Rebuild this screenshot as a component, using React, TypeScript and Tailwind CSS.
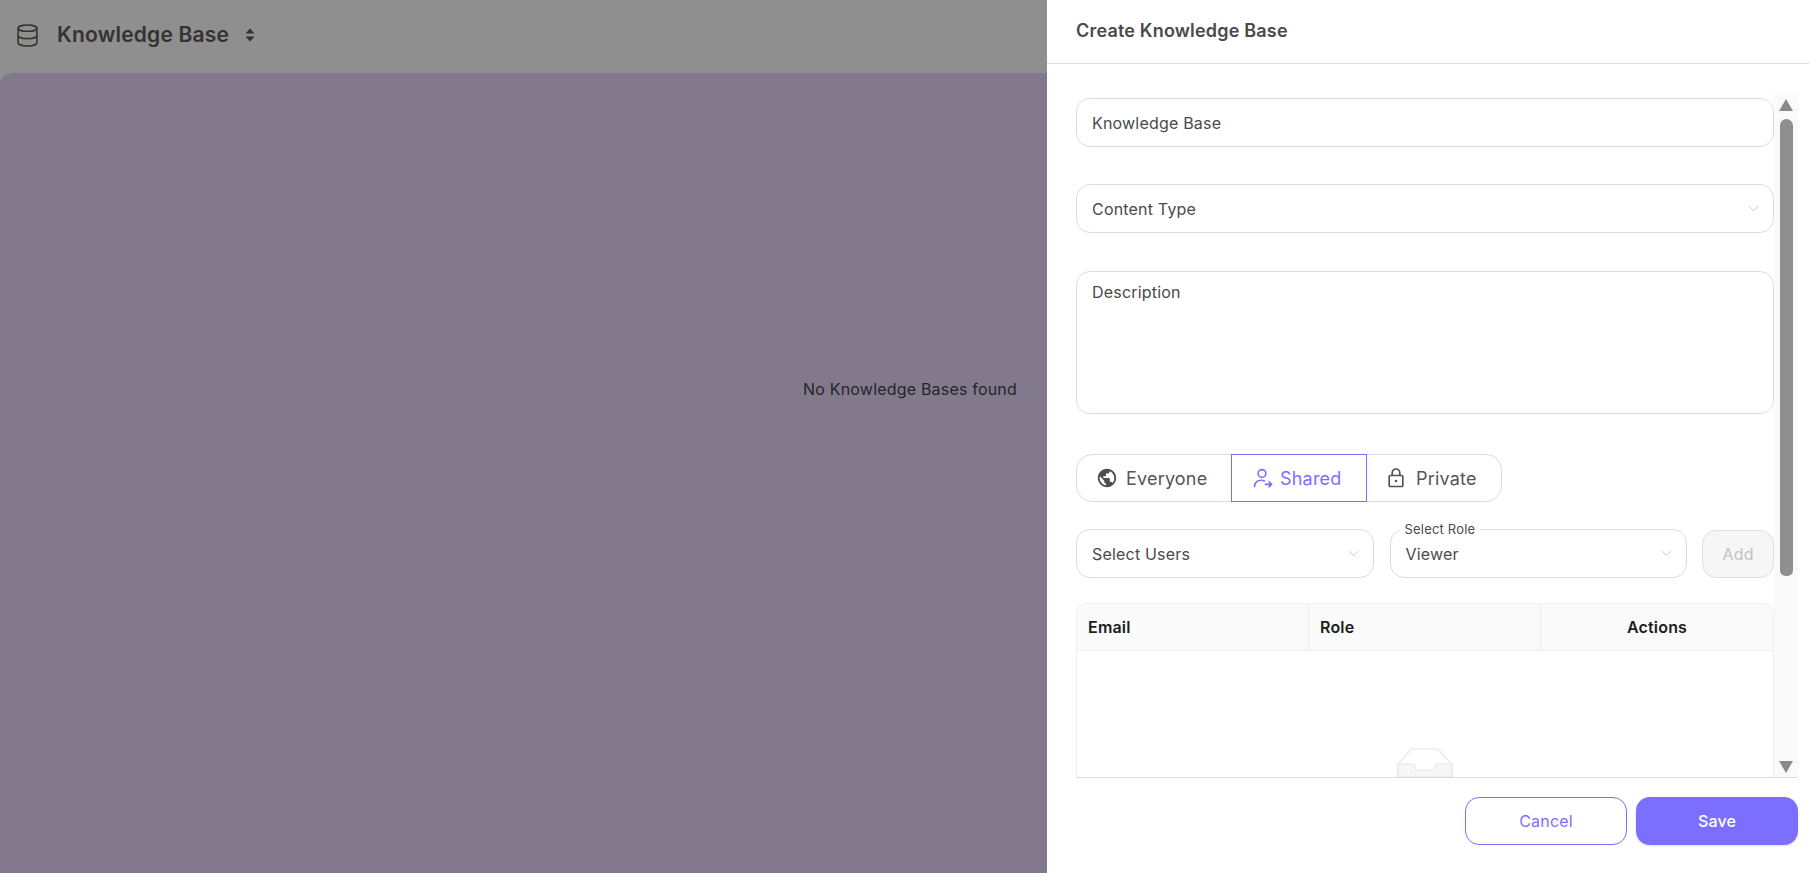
import { ChevronDown, Database } from 'lucide-react';
import { MdPublic } from 'react-icons/md';

function SharedIcon() {
  return (
    <svg width="20" height="20" viewBox="0 0 20 20" fill="none" stroke="currentColor" strokeWidth="1.6" strokeLinecap="round" strokeLinejoin="round">
      <circle cx="9" cy="5.5" r="3.9" />
      <path d="M1.6 18.5c0-3.9 2.8-6.3 6.6-6.3 1.2 0 2.2.2 3.1.6" />
      <path d="M12.4 16.4h6M16 13.8l2.6 2.6-2.6 2.4" />
    </svg>
  );
}

function LockIcon() {
  return (
    <svg width="18" height="20" viewBox="0 0 18 20" fill="none" stroke="currentColor" strokeWidth="1.7" strokeLinejoin="round">
      <rect x="2.2" y="7.5" width="13.6" height="11" rx="1" />
      <path d="M5.2 7.5V4.8C5.2 2.7 6.9 1 9 1s3.8 1.7 3.8 3.8v2.7" />
      <circle cx="9" cy="13" r="1.3" fill="currentColor" stroke="none" />
    </svg>
  );
}

function EmptyInbox() {
  return (
    <svg width="56" height="29" viewBox="0 0 56 29" fill="none" className="mx-auto mt-[97px] block shrink-0">
      <path d="M1 16.5 14 1h27l14 15.5V29H1z" fill="#ffffff" stroke="#e6e6e6" strokeWidth="1.2" />
      <path d="M1 16h15c1.5 0 2 .8 2 2.5 0 2.2 1.2 3.5 3 3.5h14c1.8 0 3-1.3 3-3.5 0-1.700.5-2.500 2-2.500h15v13H1z" fill="#f7f7f7" stroke="#e6e6e6" strokeWidth="1.2" />
    </svg>
  );
}

function Field({ label, chevron }: { label: string; chevron?: boolean }) {
  return (
    <div className="flex h-[49px] items-center justify-between rounded-[14px] border border-[#dcdcdc] pl-[15px] pr-[11px] text-[16px] text-[#4a4a4a]">
      <span>{label}</span>
      {chevron && <ChevronDown size={17} strokeWidth={1} className="text-[#b4b4b4]" />}
    </div>
  );
}

export default function App() {
  return (
    <div className="relative h-[873px] w-full overflow-hidden bg-[#8f8f8f] font-['Inter',sans-serif] tracking-[0.012em]">
      <header className="flex h-[73px] items-center pb-[3px] pl-[15px] text-[#35322f]">
        <Database size={25} strokeWidth={1.5} />
        <h1 className="ml-[17px] text-[21px] font-semibold">Knowledge Base</h1>
        <svg width="10" height="14" viewBox="0 0 10 14" fill="currentColor" className="ml-[16px]">
          <path d="M5 0.5 9.500 5.500H.5zM5 13.500.5 8.500h9z" />
        </svg>
      </header>

      <main className="h-[800px] rounded-tl-[12px] bg-[#827a8c] pl-[11px] pt-[304px] text-center text-[16px] text-[#26242a]">
        No Knowledge Bases found
      </main>

      <aside className="absolute right-0 top-0 flex h-full w-[762px] flex-col bg-white">
        <div className="flex h-[64px] shrink-0 items-center border-b border-[#dedede] pb-[3px] pl-[29px] text-[18px] font-semibold text-[#4a4a4a]">
          Create Knowledge Base
        </div>

        <div className="mt-[29px] flex min-h-0 flex-1 pl-[29px] pr-[11px]">
          <div className="flex min-w-0 flex-1 flex-col overflow-hidden pt-[5px]">
            <Field label="Knowledge Base" />
            <div className="mt-[37px]">
              <Field label="Content Type" chevron />
            </div>
            <div className="mt-[38px] h-[143px] shrink-0 rounded-[14px] border border-[#dcdcdc] px-[15px] pt-[8px] text-[16px] text-[#4a4a4a]">
              Description
            </div>

            <div className="mt-[40px] flex h-[48px] w-[426px] shrink-0 rounded-[16px] border border-[#dcdcdc] text-[18px] text-[#555555]">
              <div className="flex w-[154px] items-center gap-[8px] pl-[19px]">
                <MdPublic size={22} className="text-[#4f4f4f]" />
                <span>Everyone</span>
              </div>
              <div className="-my-px flex w-[136px] items-center gap-[7px] border border-[#7c6fff] pl-[21px] text-[#7c6fff]">
                <SharedIcon />
                <span>Shared</span>
              </div>
              <div className="flex flex-1 items-center gap-[11px] pl-[20px]">
                <LockIcon />
                <span>Private</span>
              </div>
            </div>

            <div className="mt-[27px] flex shrink-0 items-end">
              <div className="w-[298px]">
                <Field label="Select Users" chevron />
              </div>
              <div className="relative ml-[16px] w-[298px]">
                <Field label="Viewer" chevron />
                <span className="absolute left-[10px] top-[-7px] bg-white px-[5px] text-[13px] leading-[14px] text-[#4a4a4a]">
                  Select Role
                </span>
              </div>
              <div className="ml-[15px] flex h-[48px] w-[72px] items-center justify-center rounded-[14px] border border-[#e0e0e0] bg-[#f6f6f6] text-[16px] text-[#c2c2c2]">
                Add
              </div>
            </div>

            <div className="mt-[25px] flex min-h-0 flex-1 flex-col overflow-hidden rounded-t-[10px] border-x border-t border-[#efefef]">
              <div className="grid h-[47px] shrink-0 grid-cols-3 border-b border-[#efefef] bg-[#fafafa] text-[16px] font-semibold text-[#1c1c1c]">
                <div className="flex items-center border-r border-[#efefef] pl-[11px]">Email</div>
                <div className="flex items-center border-r border-[#efefef] pl-[11px]">Role</div>
                <div className="flex items-center justify-center">Actions</div>
              </div>
              <EmptyInbox />
            </div>
          </div>

          <div className="flex w-[24px] shrink-0 flex-col items-center bg-[#fafafa] pb-[4px] pt-[6px]">
            <div className="h-0 w-0 border-x-[7px] border-b-[12px] border-x-transparent border-b-[#8a8a8a]" />
            <div className="mt-[8px] h-[457px] w-[13px] rounded-t-[7px] rounded-b-[6px] bg-[#8f8f8f]" />
            <div className="mt-auto h-0 w-0 border-x-[7px] border-t-[12px] border-x-transparent border-t-[#8a8a8a]" />
          </div>
        </div>

        <div className="mx-[11px] ml-[29px] flex h-[96px] shrink-0 justify-end gap-[9px] border-t border-[#dcdcdc] pt-[19px]">
          <button className="h-[48px] w-[162px] rounded-[14px] border border-[#7c6fff] bg-white text-[16px] text-[#7c6fff]">
            Cancel
          </button>
          <button className="h-[48px] w-[162px] rounded-[14px] bg-[#7c6fff] text-[16px] font-medium text-white shadow-sm">
            Save
          </button>
        </div>
      </aside>
    </div>
  );
}
